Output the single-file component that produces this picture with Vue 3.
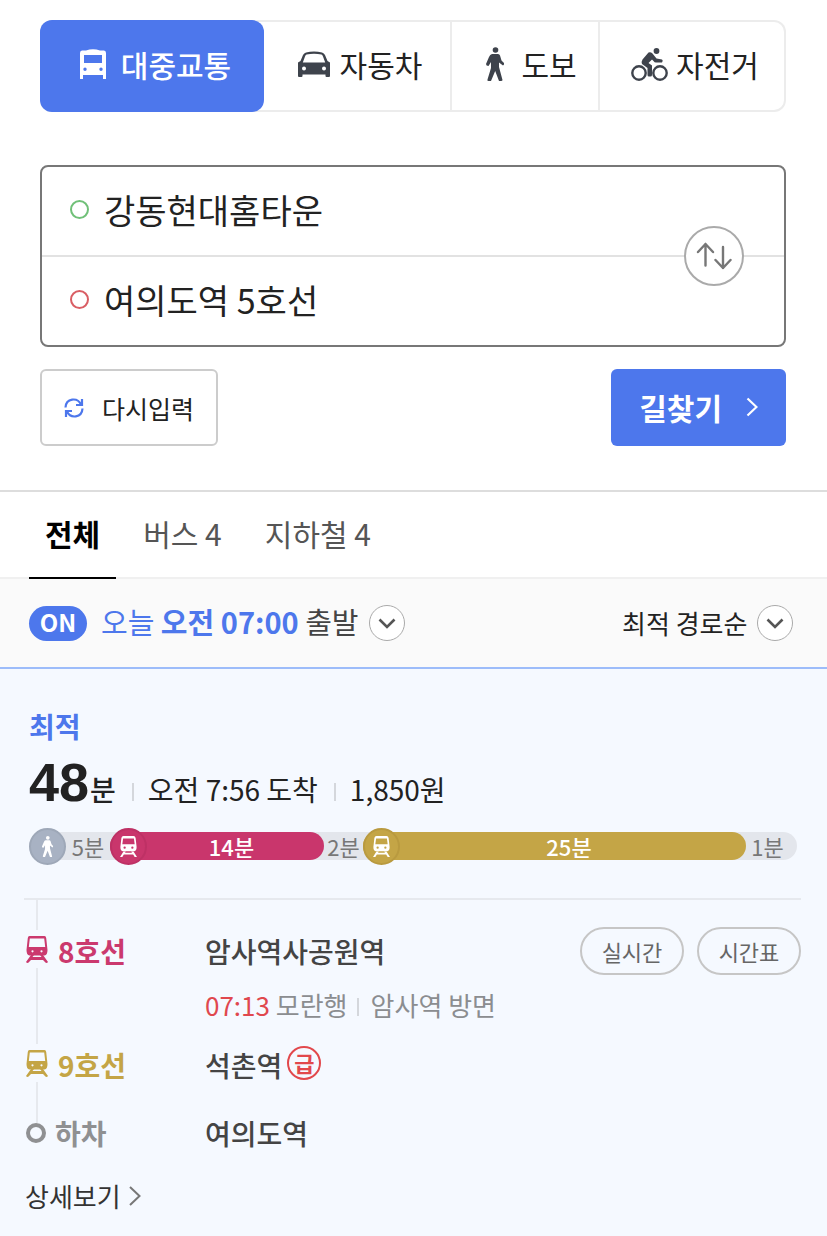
<script setup>
import { ref } from 'vue'

const modes = [
  { id: 'transit', label: '대중교통' },
  { id: 'car', label: '자동차' },
  { id: 'walk', label: '도보' },
  { id: 'bike', label: '자전거' },
]
const mode = ref('transit')

const start = ref('강동현대홈타운')
const goal = ref('여의도역 5호선')
function swap() {
  const previous = start.value
  start.value = goal.value
  goal.value = previous
}
function reset() {
  start.value = ''
  goal.value = ''
}

const filters = ['전체', '버스 4', '지하철 4']
const filter = ref('전체')
const timeOn = ref(true)
const sort = ref('best')

const segments = [
  { kind: 'walk', icon: 'walk', label: '5분', size: 81 },
  { kind: 'line8', icon: 'train', label: '14분', size: 214 },
  { kind: 'walk', label: '2분', size: 39 },
  { kind: 'line9', icon: 'train', label: '25분', size: 383 },
  { kind: 'walk', label: '1분', size: 51 },
]
</script>

<template>
  <main class="page">
    <section class="search">
      <nav class="modes" aria-label="이동 수단">
        <button
          v-for="m in modes"
          :key="m.id"
          type="button"
          class="mode"
          :class="[m.id, { active: mode === m.id }]"
          :aria-pressed="mode === m.id"
          @click="mode = m.id"
        >
          <svg v-if="m.id === 'transit'" width="28" height="30" viewBox="0 0 28 30" fill="currentColor" aria-hidden="true">
            <path fill-rule="evenodd" d="M7 1.5Q14-1 21 1.5H25Q27 1.500 27 4V30H24V26H4V30H1V4Q1 1.500 3 1.500ZM5 6V14H23V6ZM6 18.500A1.700 1.700 0 1 0 6.010 21.900A1.700 1.700 0 1 0 6 18.500ZM22 18.500A1.700 1.700 0 1 0 22.010 21.900A1.700 1.700 0 1 0 22 18.500Z" />
          </svg>
          <svg v-else-if="m.id === 'car'" width="32" height="26" viewBox="0 0 32 26" fill="currentColor" aria-hidden="true">
            <path fill-rule="evenodd" d="M8 1.500Q16-.5 24 1.500Q26 2 27 4L29.500 10L32 11.500V25Q32 26 31 26H28.500Q27.500 26 27.500 25V23.500H4.500V25Q4.500 26 3.500 26H1Q0 26 0 25V11.500L2.500 10L5 4Q6 2 8 1.500ZM8.500 3.500Q7.500 4 7 5.500L4.800 11.500H27.200L25 5.500Q24.500 4 23.500 3.500Q16 2 8.500 3.500ZM6 15.500A2 2 0 1 0 6.010 19.500A2 2 0 1 0 6 15.500ZM26 15.500A2 2 0 1 0 26.010 19.500A2 2 0 1 0 26 15.500Z" />
          </svg>
          <svg v-else-if="m.id === 'walk'" width="20" height="34" viewBox="0 0 20 34" fill="currentColor" aria-hidden="true">
            <circle cx="10.500" cy="3" r="2.800" />
            <path d="M7 7H13Q14.500 7 15 8.500L16.500 13.500L19 16Q19.500 17.500 18 18.500L14 15.500V20L17.500 33Q17.500 34 16 34H14L10.200 24L6 34H3.500Q2 34 2.500 32.500L6 21V15L3.500 19Q1 19 1 17L4 10Q5 7.500 7 7Z" />
          </svg>
          <svg v-else width="37" height="33" viewBox="0 0 37 33" fill="none" stroke="currentColor" aria-hidden="true">
            <circle cx="8" cy="25" r="6.700" stroke-width="2.400" />
            <circle cx="29" cy="25" r="6.700" stroke-width="2.400" />
            <circle cx="25.500" cy="3" r="2.900" fill="currentColor" stroke="none" />
            <path fill="currentColor" stroke="none" d="M17.500 4.500Q19.500 3.500 21.500 5.500L25.500 10.500L31 11.500Q32.500 12.500 31 14.500H25Q23.500 14.500 22.500 13L21 11.500L17.500 15L21 17.500V27Q21 28.500 19.500 28.500H18Q16.500 28.500 16.500 27V20L11 16Q10 14 11.500 11.500Z" />
          </svg>
          <span>{{ m.label }}</span>
        </button>
      </nav>

      <form @submit.prevent>
        <div class="places">
          <label class="place">
            <span class="ring from"></span>
            <input v-model="start" type="text" aria-label="출발지" />
          </label>
          <label class="place">
            <span class="ring to"></span>
            <input v-model="goal" type="text" aria-label="도착지" />
          </label>
          <button type="button" class="swap" aria-label="출발지와 도착지 바꾸기" @click="swap">
            <svg width="36" height="28" viewBox="0 0 36 28" fill="none" stroke="currentColor" stroke-width="2.400" stroke-linecap="round" stroke-linejoin="round" aria-hidden="true">
              <path d="M9.500 23.500V2M2 10L9.500 2L17 10M27 5V26M19.500 18L27 26L34.500 18" />
            </svg>
          </button>
        </div>
        <div class="actions">
          <button type="button" class="reset" @click="reset">
            <svg width="20" height="20" viewBox="0 0 20 20" fill="none" stroke="currentColor" stroke-width="2.200" aria-hidden="true">
              <path d="M1.500 9.500C2 0 13.500-1 17 6.500M18 1V7H12M18.500 10.500C18 20 6.500 21 3 13.500M2 19V13H8" />
            </svg>
            <span>다시입력</span>
          </button>
          <button type="submit" class="find">
            <span>길찾기</span>
            <svg width="12" height="20" viewBox="0 0 12 20" fill="none" stroke="currentColor" stroke-width="2.200" aria-hidden="true">
              <path d="M1.500 1.500L10.500 10L1.500 18.500" />
            </svg>
          </button>
        </div>
      </form>
    </section>

    <nav class="filters" aria-label="경로 종류">
      <button
        v-for="f in filters"
        :key="f"
        type="button"
        :class="{ active: filter === f }"
        :aria-pressed="filter === f"
        @click="filter = f"
      >{{ f }}</button>
    </nav>

    <div class="options">
      <div class="departure">
        <button type="button" class="toggle" :aria-pressed="timeOn" @click="timeOn = !timeOn">ON</button>
        <button type="button" class="time">
          <span class="when"><span class="blue">오늘 <b>오전 07:00</b></span> 출발</span>
          <span class="round">
            <svg width="18" height="11" viewBox="0 0 18 11" aria-hidden="true"><path d="M1.500 1.500L9 9L16.500 1.500" /></svg>
          </span>
        </button>
      </div>
      <label class="sort">
        <select v-model="sort" aria-label="정렬">
          <option value="best">최적 경로순</option>
        </select>
        <span class="round">
          <svg width="18" height="11" viewBox="0 0 18 11" aria-hidden="true"><path d="M1.500 1.500L9 9L16.500 1.500" /></svg>
        </span>
      </label>
    </div>

    <article class="route">
      <header class="summary">
        <strong class="best">최적</strong>
        <p class="facts">
          <span class="duration"><b>48</b>분</span>
          <span class="fact">오전 7:56 도착</span>
          <span class="fact">1,850원</span>
        </p>
        <div class="track">
          <div
            v-for="(s, i) in segments"
            :key="i"
            class="segment"
            :class="s.kind"
            :style="{ flexGrow: s.size }"
          >
            <span v-if="s.icon" class="badge">
              <svg v-if="s.icon === 'walk'" width="13" height="21" viewBox="0 0 20 34" fill="currentColor" aria-hidden="true">
                <circle cx="10.500" cy="3" r="3" />
                <path d="M7 7H13Q14.500 7 15 8.500L16.500 13.500L19 16Q19.500 17.500 18 18.500L14 15.500V20L17.500 33Q17.500 34 16 34H14L10.200 24L6 34H3.500Q2 34 2.500 32.500L6 21V15L3.500 19Q1 19 1 17L4 10Q5 7.500 7 7Z" />
              </svg>
              <svg v-else width="17" height="21" viewBox="0 0 22 27" fill="currentColor" aria-hidden="true">
                <path fill-rule="evenodd" d="M4.500 0H17.500Q19.800 0 20.200 2.500L21.500 14Q21.500 19 18.500 19.500H3.500Q.5 19 .5 14L1.800 2.500Q2.200 0 4.500 0ZM4 3L3 10.500H19L18 3ZM6 13.500A1.500 1.500 0 1 0 6.010 16.500A1.500 1.500 0 1 0 6 13.500ZM16 13.500A1.500 1.500 0 1 0 16.010 16.500A1.500 1.500 0 1 0 16 13.500Z" />
                <path d="M4.500 20H7.500L6.500 21.500H15.500L14.500 20H17.500L22 27H19L17 24H5L3 27H0Z" />
              </svg>
            </span>
            <span class="minutes">{{ s.label }}</span>
          </div>
        </div>
      </header>

      <ol class="steps">
        <li class="step first line8-text">
          <span class="label">
            <span class="mark">
              <svg width="22" height="27" viewBox="0 0 22 27" fill="currentColor" aria-hidden="true">
                <path fill-rule="evenodd" d="M3.500 0H18.500Q20 0 20.200 2L21.500 14Q21.500 19 18.500 19.500H3.500Q.5 19 .5 14L1.800 2Q2 0 3.500 0ZM3.800 2.500L2.800 11H19.200L18.200 2.500ZM6.500 14.200A1.100 1.100 0 1 0 6.510 16.400A1.100 1.100 0 1 0 6.500 14.200ZM15.500 14.200A1.100 1.100 0 1 0 15.510 16.400A1.100 1.100 0 1 0 15.500 14.200Z" />
                <path d="M5 19H8L6.500 21H15.500L14 19H17L22 26Q21.500 27 20 27L17 24H5L2 27Q.5 27 0 26Z" />
              </svg>
            </span>
            8호선
          </span>
          <span class="station">암사역사공원역</span>
          <span class="links">
            <button type="button">실시간</button>
            <button type="button">시간표</button>
          </span>
          <p class="train"><time>07:13</time> 모란행<i></i>암사역 방면</p>
        </li>
        <li class="step line9-text">
          <span class="label">
            <span class="mark">
              <svg width="22" height="27" viewBox="0 0 22 27" fill="currentColor" aria-hidden="true">
                <path fill-rule="evenodd" d="M3.500 0H18.500Q20 0 20.200 2L21.500 14Q21.500 19 18.500 19.500H3.500Q.5 19 .5 14L1.800 2Q2 0 3.500 0ZM3.800 2.500L2.800 11H19.200L18.200 2.500ZM6.500 14.200A1.100 1.100 0 1 0 6.510 16.400A1.100 1.100 0 1 0 6.500 14.200ZM15.500 14.200A1.100 1.100 0 1 0 15.510 16.400A1.100 1.100 0 1 0 15.500 14.200Z" />
                <path d="M5 19H8L6.500 21H15.500L14 19H17L22 26Q21.500 27 20 27L17 24H5L2 27Q.5 27 0 26Z" />
              </svg>
            </span>
            9호선
          </span>
          <span class="station">석촌역<span class="express">급</span></span>
        </li>
        <li class="step last">
          <span class="label"><span class="stop"></span>하차</span>
          <span class="station">여의도역</span>
        </li>
      </ol>

      <a href="#detail" class="detail">
        상세보기
        <svg width="12" height="20" viewBox="0 0 12 20" fill="none" stroke="currentColor" stroke-width="2" aria-hidden="true">
          <path d="M1 1L10.500 10L1 19" />
        </svg>
      </a>
    </article>
  </main>
</template>

<style>
body {
  background: #f5f9ff;
}
</style>

<style scoped>
* {
  box-sizing: border-box;
}
.page {
  color: #222;
  background: #fff;
  font-family: "Noto Sans CJK KR", "Noto Sans", sans-serif;
}
button,
input,
select {
  margin: 0;
  padding: 0;
  border: 0;
  background: none;
  color: inherit;
  font: inherit;
}
button {
  cursor: pointer;
}
svg {
  display: block;
  flex: none;
}

.search {
  padding: 20px 41px 44px 40px;
}
.modes {
  display: grid;
  grid-template-columns: 224fr 188fr 148fr 186fr;
  border-radius: 12px;
  box-shadow: inset 0 0 0 2px #ececec;
}
.mode {
  display: flex;
  align-items: center;
  justify-content: center;
  gap: 10px;
  height: 92px;
  padding: 0 0 4px 6px;
  border-right: 2px solid #ececec;
  font-size: 30px;
  line-height: 40px;
  color: #222;
}
.mode:last-child {
  border-right: 0;
}
.mode svg {
  color: #3e434c;
}
.mode.transit {
  gap: 14px;
}
.mode.walk {
  gap: 16px;
  padding-left: 12px;
}
.mode.bike {
  gap: 8px;
  padding-left: 4px;
}
.mode.active {
  border-right: 0;
  border-radius: 12px;
  background: #4d77ec;
  color: #fff;
  font-weight: 500;
}
.mode.active svg {
  color: #fff;
}

.places {
  position: relative;
  margin-top: 53px;
  border: 2px solid #777;
  border-radius: 8px;
}
.place {
  display: flex;
  align-items: center;
  gap: 15px;
  height: 88px;
  padding: 0 110px 4px 28px;
}
.place + .place {
  height: 90px;
  border-top: 2px solid #e2e2e2;
}
.ring {
  flex: none;
  width: 19px;
  height: 19px;
  border: 2px solid #70c078;
  border-radius: 50%;
}
.ring.to {
  border-color: #d95e64;
}
.place input {
  flex: 1;
  min-width: 0;
  height: 52px;
  font-size: 34px;
  outline: none;
}
.swap {
  position: absolute;
  top: 50%;
  right: 40px;
  display: grid;
  place-items: center;
  width: 60px;
  height: 60px;
  margin-top: -30px;
  border: 2px solid #aaa;
  border-radius: 50%;
  background: #fff;
  color: #777;
}
.actions {
  display: flex;
  justify-content: space-between;
  margin-top: 22px;
}
.reset,
.find {
  display: flex;
  align-items: center;
  height: 77px;
  border-radius: 6px;
}
.reset {
  gap: 18px;
  padding: 0 22px;
  border: 2px solid #ccc;
  font-size: 25px;
}
.reset svg {
  color: #4d77ec;
}
.find {
  gap: 24px;
  padding: 0 28px 2px;
  background: #4d77ec;
  color: #fff;
  font-size: 30px;
  font-weight: 700;
}

.filters {
  display: flex;
  gap: 11px;
  padding: 0 29px;
  border-top: 2px solid #ddd;
  box-shadow: inset 0 -2px #f0f0f0;
}
.filters button {
  height: 87px;
  padding: 0 16px 4px;
  border-bottom: 2px solid transparent;
  font-size: 30px;
  color: #555;
}
.filters .active {
  border-color: #000;
  color: #000;
  font-weight: 700;
}

.options {
  display: flex;
  align-items: center;
  justify-content: space-between;
  height: 90px;
  padding: 0 34px 0 29px;
  border-bottom: 2px solid #9dbcfa;
  background: #fafafa;
}
.departure,
.time {
  display: flex;
  align-items: center;
}
.departure {
  gap: 14px;
}
.toggle {
  width: 58px;
  height: 35px;
  padding-bottom: 4px;
  border-radius: 18px;
  background: #4d77ec;
  color: #fff;
  font-size: 24px;
  font-weight: 700;
  line-height: 31px;
}
.time {
  gap: 10px;
  font-size: 29px;
  line-height: 44px;
  color: #444;
}
.when {
  padding-bottom: 4px;
}
.blue {
  color: #4d77ec;
}
.round {
  display: grid;
  place-items: center;
  width: 36px;
  height: 36px;
  border: 1px solid #aaa;
  border-radius: 50%;
  background: #fff;
}
.round path {
  fill: none;
  stroke: #555;
  stroke-width: 2.6;
}
.sort {
  position: relative;
  display: flex;
  align-items: center;
}
.sort select {
  padding-right: 45px;
  appearance: none;
  font-size: 26px;
  line-height: 40px;
}
.sort .round {
  position: absolute;
  right: 0;
  pointer-events: none;
}

.route {
  padding: 37px 26px 20px 24px;
  background: #f5f9ff;
}
.summary {
  padding: 0 4px 0 5px;
}
.best {
  display: block;
  color: #4d77ec;
  font-size: 28px;
  line-height: 40px;
}
.facts {
  display: flex;
  align-items: baseline;
  margin: 8px 0 15px;
  font-size: 28px;
  line-height: 56px;
}
.duration {
  font-weight: 500;
}
.duration b {
  margin-right: 1px;
  font-family: "Liberation Sans", Arial, sans-serif;
  font-size: 54px;
}
.fact::before {
  content: "";
  display: inline-block;
  width: 2px;
  height: 18px;
  margin: 0 14px 0 16px;
  background: #d4d7dc;
}
.track {
  display: flex;
  height: 28px;
  border-radius: 14px;
  background: #e3e6ec;
}
.segment {
  display: flex;
  flex-basis: 0;
  align-items: center;
  min-width: 0;
  font-size: 22px;
  line-height: 28px;
  color: #777;
}
.badge {
  display: grid;
  flex: none;
  place-items: center;
  width: 37px;
  height: 37px;
  border: 2px solid #9ea8b8;
  border-radius: 50%;
  background: #a8b2c3;
  color: #fff;
}
.minutes {
  flex: 1;
  text-align: center;
  white-space: nowrap;
}
.line8,
.line9 {
  border-radius: 14px;
  color: #fff;
  font-weight: 500;
}
.line8 .minutes,
.line9 .minutes {
  padding-right: 8px;
}
.line8 {
  background: #c9366c;
}
.line8 .badge {
  border-color: #be3165;
  background: #c9366c;
}
.line9 {
  background: #c4a546;
}
.line9 .badge {
  border-color: #b99a3f;
  background: #c4a546;
}
.segment:last-child .minutes {
  padding-right: 8px;
}

.steps {
  position: relative;
  margin: 38px 0 0;
  padding: 27px 0 0;
  border-top: 2px solid #e6e9ee;
  list-style: none;
}
.steps::before {
  content: "";
  position: absolute;
  top: 0;
  bottom: 30px;
  left: 12px;
  width: 2px;
  background: #e6e9ee;
}
.step {
  position: relative;
  display: grid;
  grid-template-columns: 179px 1fr auto;
  align-items: center;
  padding-left: 2px;
  margin-top: 20px;
  line-height: 40px;
}
.step.first {
  margin-top: 0;
}
.step.last {
  margin-top: 28px;
}
.label {
  display: flex;
  align-items: center;
  gap: 10px;
  height: 40px;
  font-size: 28px;
  font-weight: 700;
}
.mark {
  display: grid;
  place-items: center;
  height: 38px;
  margin-bottom: 4px;
  background: #f5f9ff;
}
.line8-text .label {
  color: #cb396e;
}
.line9-text .label {
  color: #c4a546;
}
.last .label {
  gap: 9px;
  color: #8f9092;
}
.stop {
  width: 20px;
  height: 20px;
  border: 4px solid #8f9092;
  border-radius: 50%;
  background: #f5f9ff;
}
.station {
  display: flex;
  align-items: center;
  gap: 5px;
  height: 40px;
  color: #444;
  font-size: 28px;
  font-weight: 500;
}
.express {
  width: 34px;
  height: 34px;
  margin-bottom: 4px;
  border: 2px solid #e2484c;
  border-radius: 50%;
  color: #e2484c;
  font-size: 22px;
  font-weight: 700;
  line-height: 28px;
  text-align: center;
}
.links {
  display: flex;
  gap: 13px;
}
.links button {
  width: 104px;
  height: 48px;
  border: 2px solid #c6c6c6;
  border-radius: 24px;
  color: #666;
  font-size: 22px;
}
.train {
  grid-column: 2 / 4;
  margin: 10px 0 0;
  color: #8b8d90;
  font-size: 26px;
}
.train time {
  color: #e0484e;
}
.train i {
  display: inline-block;
  width: 2px;
  height: 18px;
  margin: 0 12px 0 9px;
  background: #d4d7dc;
}
.detail {
  display: inline-flex;
  align-items: center;
  gap: 8px;
  margin: 23px 0 0 1px;
  color: #333;
  font-size: 26px;
  line-height: 40px;
  text-decoration: none;
}
.detail svg {
  color: #777;
}
</style>
